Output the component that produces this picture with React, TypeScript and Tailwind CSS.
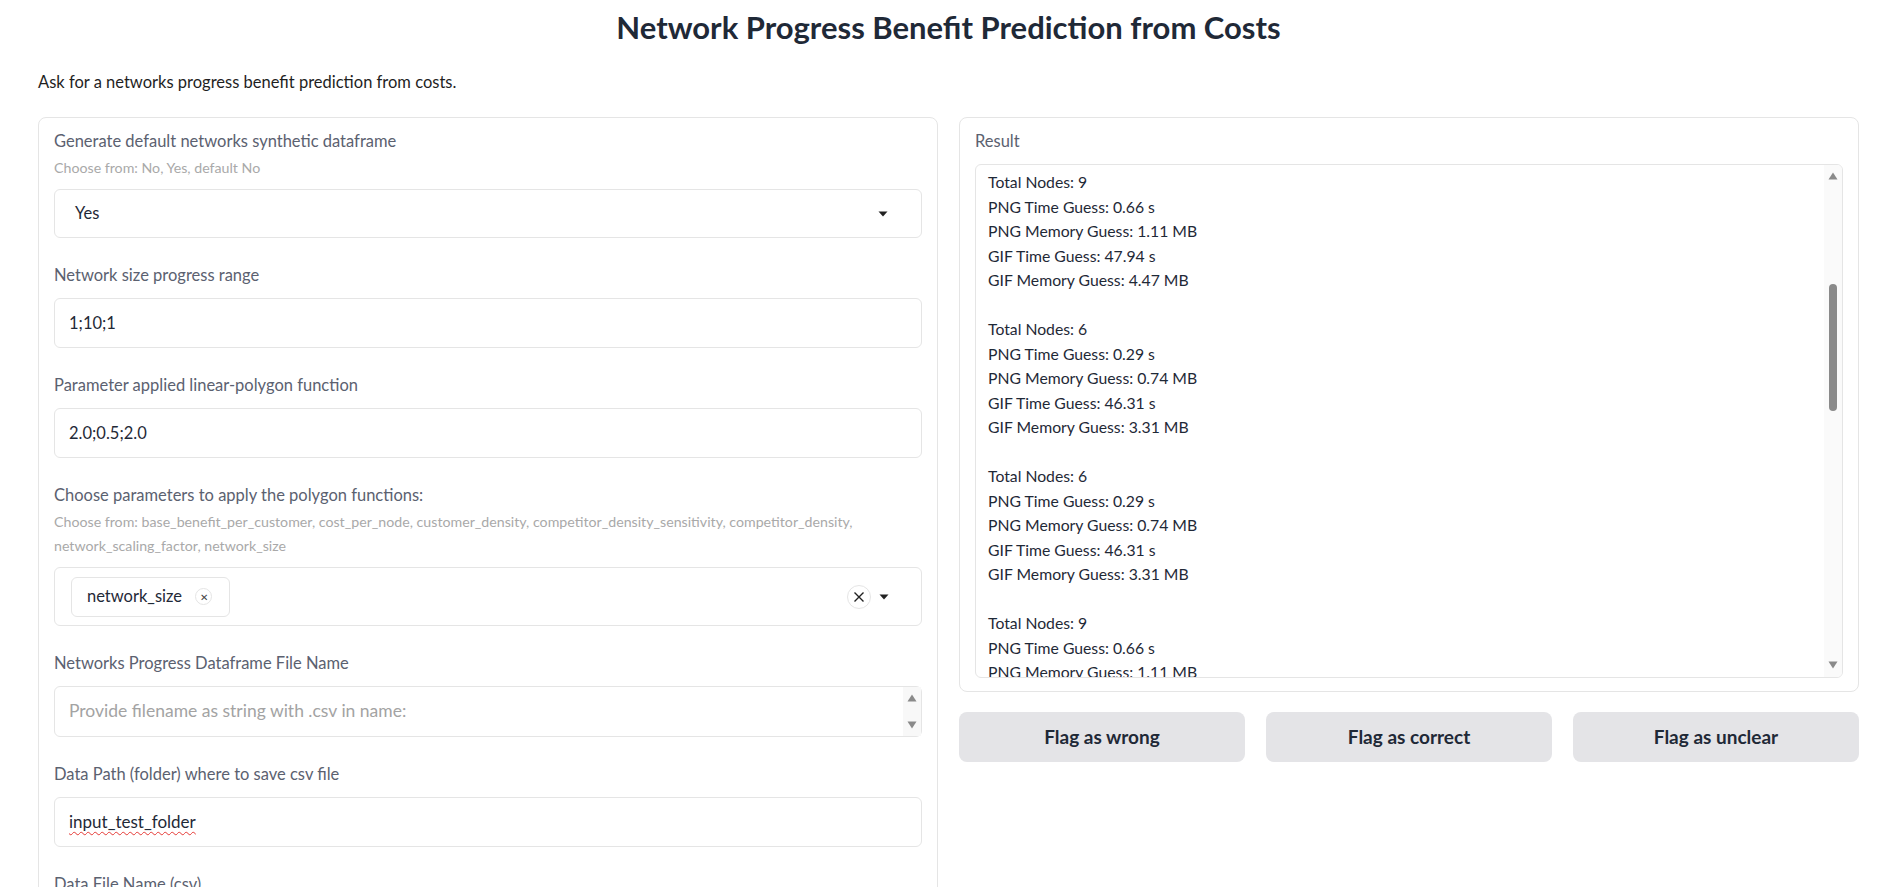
import { ReactNode } from 'react';

const blockA = [
  'Total Nodes: 9',
  'PNG Time Guess: 0.66 s',
  'PNG Memory Guess: 1.11 MB',
  'GIF Time Guess: 47.94 s',
  'GIF Memory Guess: 4.47 MB',
];

const blockB = [
  'Total Nodes: 6',
  'PNG Time Guess: 0.29 s',
  'PNG Memory Guess: 0.74 MB',
  'GIF Time Guess: 46.31 s',
  'GIF Memory Guess: 3.31 MB',
];

const resultLines = [...blockA, '', ...blockB, '', ...blockB, '', ...blockA];

function ArrowUp({ className = '' }: { className?: string }) {
  return (
    <svg width="10" height="8" viewBox="0 0 10 8" className={className}>
      <path d="M5 0.5 L9.5 7.5 L0.5 7.5 Z" fill="#8a8a8a" />
    </svg>
  );
}

function ArrowDown({ className = '' }: { className?: string }) {
  return (
    <svg width="10" height="8" viewBox="0 0 10 8" className={className}>
      <path d="M0.5 0.5 L9.5 0.5 L5 7.5 Z" fill="#8a8a8a" />
    </svg>
  );
}

function Caret() {
  return (
    <svg width="10" height="6" viewBox="0 0 10 6">
      <path d="M0.5 0.5 L9.5 0.5 L5 5.5 Z" fill="#222222" />
    </svg>
  );
}

function Label({ children }: { children: ReactNode }) {
  return <div className="text-[16.5px] leading-[22px] text-[#5b6170]">{children}</div>;
}

function Info({ children }: { children: ReactNode }) {
  return <div className="mt-[4px] text-[14.2px] leading-[24px] text-[#a9a9a9]">{children}</div>;
}

function TextBox({ value, className = '' }: { value: ReactNode; className?: string }) {
  return (
    <div
      className={`flex h-[50px] items-center rounded-md border border-[#e5e5e5] px-[14px] text-[16.5px] text-[#1f2937] ${className}`}
    >
      {value}
    </div>
  );
}

export default function App() {
  return (
    <div className="min-h-screen bg-white font-[Lato,'Noto_Sans',sans-serif] text-[#1f2937]">
      <div className="ml-[38px] w-[1821px] pt-[9px]">
        <h1 className="text-center text-[31px] font-bold leading-[36px] text-[#1f2937]">
          Network Progress Benefit Prediction from Costs
        </h1>
        <p className="mt-[26px] text-[16.5px] leading-[22px] text-[#1f1f1f]">
          Ask for a networks progress benefit prediction from costs.
        </p>

        <div className="mt-[24px] grid grid-cols-2 items-start gap-[21px]">
          {/* inputs */}
          <div className="flex flex-col gap-[26px] rounded-lg border border-[#e5e5e5] px-[15px] pb-[16px] pt-[12px]">
            <div>
              <Label>Generate default networks synthetic dataframe</Label>
              <Info>Choose from: No, Yes, default No</Info>
              <div className="mt-[9px] flex h-[49px] items-center justify-between rounded-md border border-[#e5e5e5] pl-[20px] pr-[33px] text-[16.5px]">
                <span>Yes</span>
                <Caret />
              </div>
            </div>

            <div>
              <Label>Network size progress range</Label>
              <TextBox value="1;10;1" className="mt-[12px]" />
            </div>

            <div>
              <Label>Parameter applied linear-polygon function</Label>
              <TextBox value="2.0;0.5;2.0" className="mt-[12px]" />
            </div>

            <div>
              <Label>Choose parameters to apply the polygon functions:</Label>
              <Info>
                Choose from: base_benefit_per_customer, cost_per_node, customer_density, competitor_density_sensitivity, competitor_density,
                <br />
                network_scaling_factor, network_size
              </Info>
              <div className="mt-[9px] flex h-[59px] items-center justify-between rounded-md border border-[#e5e5e5] pl-[16px] pr-[32px]">
                <div className="flex h-[40px] items-center gap-[13px] rounded-md border border-[#e5e5e5] pl-[15px] pr-[17px] text-[16.5px]">
                  <span>network_size</span>
                  <span className="flex h-[17px] w-[17px] items-center justify-center rounded-full border border-[#e5e5e5] text-[10px] leading-none text-[#444]">
                    ✕
                  </span>
                </div>
                <div className="flex items-center gap-[8px]">
                  <span className="flex h-[24px] w-[24px] items-center justify-center rounded-full border border-[#e5e5e5]">
                    <svg width="12" height="12" viewBox="0 0 12 12">
                      <path d="M1.5 1.5 L10.5 10.5 M10.5 1.5 L1.5 10.5" stroke="#222" strokeWidth="1.4" />
                    </svg>
                  </span>
                  <Caret />
                </div>
              </div>
            </div>

            <div>
              <Label>Networks Progress Dataframe File Name</Label>
              <div className="mt-[12px] flex h-[51px] rounded-md border border-[#e5e5e5]">
                <div className="flex flex-1 items-center pl-[14px] text-[17.5px] text-[#a3a3a3]">
                  Provide filename as string with .csv in name:
                </div>
                <div className="flex w-[18px] flex-col items-center justify-between bg-[#f8f8f8] py-[7px]">
                  <ArrowUp />
                  <ArrowDown />
                </div>
              </div>
            </div>

            <div>
              <Label>Data Path (folder) where to save csv file</Label>
              <TextBox
                value={
                  <span className="text-[17px] underline decoration-[#e53935] decoration-wavy decoration-1 underline-offset-[3px]">
                    input_test_folder
                  </span>
                }
                className="mt-[12px]"
              />
            </div>

            <div>
              <Label>Data File Name (csv)</Label>
              <TextBox value="input_test_file.csv" className="mt-[12px]" />
            </div>
          </div>

          {/* output */}
          <div>
            <div className="rounded-lg border border-[#e5e5e5] px-[15px] pb-[13px] pt-[12px]">
              <Label>Result</Label>
              <div className="mt-[12px] flex h-[514px] overflow-hidden rounded-md border border-[#e5e5e5]">
                <div className="flex-1 overflow-hidden pl-[12px] pt-[5px] text-[15.75px] text-[#1f2937]">
                  {resultLines.map((line, i) => (
                    <div key={i} className="h-[24.5px] leading-[24.5px]">
                      {line}
                    </div>
                  ))}
                </div>
                <div className="flex w-[18px] flex-col items-center bg-[#fafafa] pb-[8px] pt-[7px]">
                  <ArrowUp />
                  <div className="mt-[104px] h-[127px] w-[8px] rounded-full bg-[#8a8a8a]" />
                  <div className="flex-1" />
                  <ArrowDown />
                </div>
              </div>
            </div>

            <div className="mt-[20px] grid grid-cols-3 gap-[21px]">
              {['Flag as wrong', 'Flag as correct', 'Flag as unclear'].map((t) => (
                <button
                  key={t}
                  className="h-[50px] rounded-lg bg-[#e4e4e7] text-[19px] font-bold text-[#1f2937]"
                >
                  {t}
                </button>
              ))}
            </div>
          </div>
        </div>
      </div>
    </div>
  );
}
